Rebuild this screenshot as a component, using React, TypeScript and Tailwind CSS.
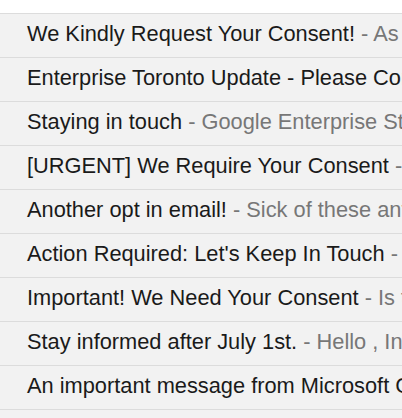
import React from 'react';

interface Mail {
  subject: string;
  snippet?: string;
}

const mails: Mail[] = [
  { subject: 'We Kindly Request Your Consent!', snippet: 'As of July 1st, we need your permission' },
  { subject: 'Enterprise Toronto Update - Please Confirm Your Subscription', snippet: 'Hello' },
  { subject: 'Staying in touch', snippet: 'Google Enterprise Startup Program news' },
  { subject: '[URGENT] We Require Your Consent', snippet: 'Canada anti-spam law' },
  { subject: 'Another opt in email!', snippet: 'Sick of these anti-spam emails yet?' },
  { subject: "Action Required: Let's Keep In Touch", snippet: 'Please confirm' },
  { subject: 'Important! We Need Your Consent', snippet: 'Is this email still relevant' },
  { subject: 'Stay informed after July 1st.', snippet: 'Hello , In order to comply' },
  { subject: 'An important message from Microsoft Canada', snippet: 'CASL' },
];

export default function App() {
  return (
    <div className="w-[402px] h-[418px] overflow-hidden bg-[#f2f2f2] font-['Liberation_Sans',Arial,sans-serif]">
      <div className="h-[13px] bg-white" />
      <ul className="border-t border-[#dcdcdc]">
        {mails.map((m) => (
          <li
            key={m.subject}
            className="h-[44px] border-b border-[#dcdcdc] flex items-center pl-[27px] pb-[3px] whitespace-nowrap overflow-hidden text-[21.8px] leading-none"
          >
            <span className="text-[#1a1a1a]">{m.subject}</span>
            {m.snippet && <span className="text-[#777777]">&nbsp;- {m.snippet}</span>}
          </li>
        ))}
      </ul>
    </div>
  );
}
